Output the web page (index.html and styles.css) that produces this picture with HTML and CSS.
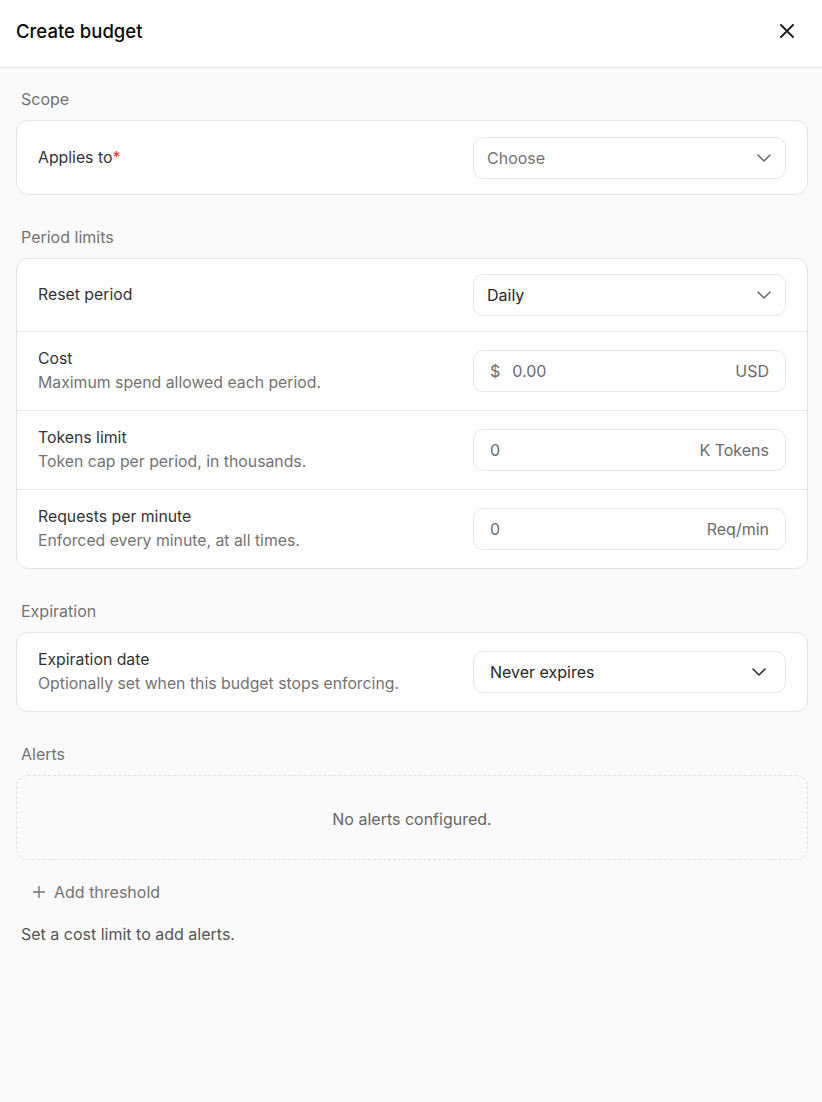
FILE: index.html
```html
<!DOCTYPE html>
<html lang="en">
  <head>
    <meta charset="UTF-8" />
    <meta name="viewport" content="width=device-width, initial-scale=1.0" />
    <title>Create budget</title>
    <link rel="stylesheet" href="styles.css">
  </head>
  <body>
    <div class="modal">
      <header class="modal-header">
        <h1>Create budget</h1>
        <button class="close-btn" aria-label="Close">
          <svg width="14" height="14" viewBox="0 0 14 14" fill="none" stroke="currentColor" stroke-width="1.8" stroke-linecap="round">
            <path d="M1 1l12 12M13 1L1 13" />
          </svg>
        </button>
      </header>

      <div class="modal-body">
        <section class="section">
          <h2 class="section-title">Scope</h2>
          <div class="card">
            <div class="row">
              <div class="row-text">
                <div class="row-label">Applies to<span class="required">*</span></div>
              </div>
              <div class="select select-placeholder">
                <span>Choose</span>
                <svg class="chevron" width="24" height="24" viewBox="0 0 24 24" fill="none" stroke="currentColor" stroke-width="1.5" stroke-linecap="round" stroke-linejoin="round"><path d="m6 9 6 6 6-6" /></svg>
              </div>
            </div>
          </div>
        </section>

        <section class="section">
          <h2 class="section-title">Period limits</h2>
          <div class="card">
            <div class="row">
              <div class="row-text">
                <div class="row-label">Reset period</div>
              </div>
              <div class="select">
                <span>Daily</span>
                <svg class="chevron" width="24" height="24" viewBox="0 0 24 24" fill="none" stroke="currentColor" stroke-width="1.5" stroke-linecap="round" stroke-linejoin="round"><path d="m6 9 6 6 6-6" /></svg>
              </div>
            </div>
            <div class="row">
              <div class="row-text">
                <div class="row-label">Cost</div>
                <div class="row-desc">Maximum spend allowed each period.</div>
              </div>
              <div class="field">
                <span class="prefix">$</span>
                <span class="value">0.00</span>
                <span class="suffix">USD</span>
              </div>
            </div>
            <div class="row">
              <div class="row-text">
                <div class="row-label">Tokens limit</div>
                <div class="row-desc">Token cap per period, in thousands.</div>
              </div>
              <div class="field">
                <span class="value">0</span>
                <span class="suffix">K Tokens</span>
              </div>
            </div>
            <div class="row">
              <div class="row-text">
                <div class="row-label">Requests per minute</div>
                <div class="row-desc">Enforced every minute, at all times.</div>
              </div>
              <div class="field">
                <span class="value">0</span>
                <span class="suffix">Req/min</span>
              </div>
            </div>
          </div>
        </section>

        <section class="section">
          <h2 class="section-title">Expiration</h2>
          <div class="card">
            <div class="row">
              <div class="row-text">
                <div class="row-label">Expiration date</div>
                <div class="row-desc">Optionally set when this budget stops enforcing.</div>
              </div>
              <div class="select select-date">
                <span>Never expires</span>
                <svg class="chevron" width="24" height="24" viewBox="0 0 24 24" fill="none" stroke="currentColor" stroke-width="1.6" stroke-linecap="round" stroke-linejoin="round"><path d="m6 9 6 6 6-6" /></svg>
              </div>
            </div>
          </div>
        </section>

        <section class="section">
          <h2 class="section-title">Alerts</h2>
          <div class="empty-alerts">No alerts configured.</div>
          <button class="add-btn">
            <svg width="12" height="12" viewBox="0 0 12 12" fill="none" stroke="currentColor" stroke-width="1.4" stroke-linecap="round"><path d="M6 0.5v11M0.5 6h11" /></svg>
            Add threshold
          </button>
          <p class="hint">Set a cost limit to add alerts.</p>
        </section>
      </div>
    </div>
  </body>
</html>
```

FILE: styles.css
```css
* {
  box-sizing: border-box;
}

body {
  margin: 0;
  font-family: "Inter", "Noto Sans", sans-serif;
  background-color: #fafafa;
  color: #333;
}

.modal {
  min-height: 100vh;
  background: #fafafa;
}

.modal-header {
  height: 68px;
  display: flex;
  align-items: center;
  justify-content: space-between;
  padding: 0 16px 5px 16px;
  background: white;
  border-bottom: 1px solid #e5e5e5;
}

.modal-header h1 {
  margin: 0;
  font-size: 18.5px;
  font-weight: 500;
  color: #0a0a0a;
}

.close-btn {
  display: flex;
  align-items: center;
  justify-content: center;
  width: 28px;
  height: 28px;
  margin-right: 5px;
  padding: 0;
  border: none;
  background: none;
  color: #1a1a1a;
  cursor: pointer;
}

.modal-body {
  padding: 21px 14px 40px 16px;
}

.section {
  margin-bottom: 32px;
}

.section-title {
  margin: 0 0 11px 5px;
  font-size: 16px;
  line-height: 20px;
  font-weight: 400;
  color: #737373;
}

.card {
  background: white;
  border: 1px solid #e4e4e7;
  border-radius: 12px;
}

.row {
  display: flex;
  align-items: center;
  justify-content: space-between;
  min-height: 73px;
  padding: 15px 21px;
  border-bottom: 1px solid #e9e9eb;
}

.row:last-child {
  border-bottom: none;
}

.row-label {
  font-size: 15.8px;
  line-height: 24px;
  color: #333338;
}

.required {
  color: #ef2b2b;
}

.row-desc {
  font-size: 15.8px;
  line-height: 24px;
  color: #737373;
}

.select,
.field {
  width: 313px;
  height: 42px;
  display: flex;
  align-items: center;
  border: 1px solid #e6e6e8;
  border-radius: 10px;
  background: white;
  font-size: 16px;
}

.select {
  justify-content: space-between;
  padding: 0 9px 0 13px;
  color: #27272a;
}

.select-placeholder {
  color: #737373;
}

.select-date {
  padding: 0 14px 0 16px;
}

.chevron {
  color: #666;
}

.select-date .chevron {
  color: #333;
}

.field {
  padding: 0 16px;
  color: #6b6b6b;
}

.prefix {
  margin-right: 12px;
}

.value {
  flex: 1;
}

.empty-alerts {
  height: 85px;
  display: flex;
  align-items: center;
  justify-content: center;
  border: 1px dashed #e0e0e2;
  border-radius: 12px;
  font-size: 16px;
  color: #666;
  padding-top: 2px;
}

.add-btn {
  display: flex;
  align-items: center;
  gap: 9px;
  height: 36px;
  margin-top: 14px;
  padding: 0 17px;
  border: none;
  background: none;
  font-family: inherit;
  font-size: 16px;
  color: #737373;
  cursor: pointer;
}

.hint {
  margin: 12px 0 0 5px;
  font-size: 16px;
  line-height: 24px;
  color: #555;
}
```
